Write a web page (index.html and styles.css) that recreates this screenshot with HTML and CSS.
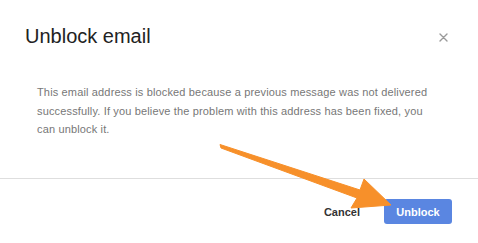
FILE: index.html
```html
<!DOCTYPE html>
<html lang="en">
<head>
    <meta charset="UTF-8">
    <meta name="viewport" content="width=device-width, initial-scale=1.0">
    <title>Unblock email</title>
    <link rel="stylesheet" href="styles.css">
</head>
<body>
    <div class="modal">
        <div class="modal-header">
            <h1 class="modal-title">Unblock email</h1>
            <button class="btn-x" aria-label="Close">
                <svg width="9" height="9" viewBox="0 0 9 9">
                    <path d="M1 1L8 8M8 1L1 8" stroke="#9a9a9a" stroke-width="1.4" stroke-linecap="round"/>
                </svg>
            </button>
        </div>

        <div class="modal-body">
            <p>This email address is blocked because a previous message was not delivered successfully. If you believe the problem with this address has been fixed, you can unblock it.</p>
        </div>

        <div class="modal-footer">
            <button class="btn-cancel">Cancel</button>
            <button class="btn-unblock">Unblock</button>
        </div>

        <!-- arrow drawn on top of the screenshot -->
        <svg class="arrow" width="478" height="243" viewBox="0 0 478 243">
            <polygon points="220,144.5 221,148 357,198 351,208 391,205 364,179 360,190" fill="#f7902a" stroke="#f7902a" stroke-width="1" stroke-linejoin="round"/>
        </svg>
    </div>
</body>
</html>
```

FILE: styles.css
```css
* {
    margin: 0;
    padding: 0;
    box-sizing: border-box;
}

body, html {
    height: 100%;
    background: #fff;
    font-family: "Liberation Sans", Arial, sans-serif;
    overflow: hidden;
}

.modal {
    position: relative;
    height: 100%;
    display: flex;
    flex-direction: column;
}

.modal-header {
    display: flex;
    justify-content: space-between;
    align-items: center;
    padding: 24px 30px 0 25px;
}

.modal-title {
    font-size: 20px;
    font-weight: normal;
    color: #222;
    line-height: 24px;
}

.btn-x {
    background: none;
    border: none;
    display: flex;
    margin-top: 2px;
}

.modal-body {
    flex: 1;
    padding: 35px 40px 0 37px;
}

.modal-body p {
    font-size: 11px;
    letter-spacing: 0.15px;
    line-height: 18.5px;
    color: #777;
}

.modal-footer {
    height: 65px;
    border-top: 1px solid #dedede;
    display: flex;
    justify-content: flex-end;
    align-items: flex-start;
    gap: 24px;
    padding: 20px 26px 0 0;
}

.btn-cancel {
    background: none;
    border: none;
    height: 25px;
    font-family: inherit;
    font-size: 11px;
    font-weight: bold;
    color: #333;
}

.btn-unblock {
    width: 68px;
    height: 25px;
    border: none;
    border-radius: 3px;
    background-color: #5a86e1;
    color: #fff;
    font-family: inherit;
    font-size: 11px;
    font-weight: bold;
}

.arrow {
    position: absolute;
    top: 0;
    left: 0;
    pointer-events: none;
}
```
